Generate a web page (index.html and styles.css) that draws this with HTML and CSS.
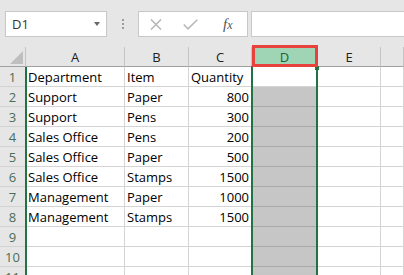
FILE: index.html
```html
<!DOCTYPE html>
<html lang="en">
<head>
    <meta charset="UTF-8">
    <meta name="viewport" content="width=device-width, initial-scale=1.0">
    <title>Workbook</title>
    <link rel="stylesheet" href="styles.css">
</head>
<body>

<!-- Name box + formula bar -->
<div class="toolbar">
    <div class="name-box">
        <span>D1</span>
        <span class="caret"></span>
    </div>
    <div class="grip"><i></i><i></i><i></i></div>
    <div class="fx-buttons">
        <svg class="icon-cancel" width="12" height="11" viewBox="0 0 12 11">
            <path d="M1 0.5 L11 10.5 M11 0.5 L1 10.5" />
        </svg>
        <svg class="icon-enter" width="15" height="11" viewBox="0 0 15 11">
            <path d="M0.8 5.5 L5 9.8 L14.3 0.8" />
        </svg>
        <span class="fx">f<span class="x">x</span></span>
    </div>
    <div class="formula-input"></div>
</div>

<!-- Grid -->
<div class="sheet-wrap">
    <div class="sheet" id="sheet">
        <div class="corner"><span class="tri"></span></div>
        <div class="col-head">A</div>
        <div class="col-head">B</div>
        <div class="col-head">C</div>
        <div class="col-head active">D</div>
        <div class="col-head">E</div>
        <div class="col-head"></div>
    </div>

    <!-- selection marks drawn over the grid -->
    <div class="marks">
        <div class="row-marker"></div>
        <div class="selection"></div>
    </div>
</div>

<script>
    const rows = [
        ['Department', 'Item', 'Quantity'],
        ['Support', 'Paper', '800'],
        ['Support', 'Pens', '300'],
        ['Sales Office', 'Pens', '200'],
        ['Sales Office', 'Paper', '500'],
        ['Sales Office', 'Stamps', '1500'],
        ['Management', 'Paper', '1000'],
        ['Management', 'Stamps', '1500'],
        [], [], []
    ];

    const sheet = document.getElementById('sheet');

    rows.forEach((row, i) => {
        const num = document.createElement('div');
        num.className = 'row-head';
        num.textContent = i + 1;
        sheet.appendChild(num);

        for (let c = 0; c < 6; c++) {
            const cell = document.createElement('div');
            cell.className = 'cell';
            const value = row[c] || '';
            // numbers sit on the right, like in a real sheet
            if (/^\d+$/.test(value)) cell.classList.add('num');
            if (c === 3) cell.classList.add(i === 0 ? 'current' : 'picked');
            cell.textContent = value;
            sheet.appendChild(cell);
        }
    });
</script>

</body>
</html>
```

FILE: styles.css
```css
body {
    margin: 0;
    padding: 0;
    background: #e6e6e6;
    font-family: 'Open Sans', 'Liberation Sans', sans-serif;
    font-size: 13px;
    color: #000;
    height: 275px;
    overflow: hidden;
}

/* ---------- formula bar ---------- */

.toolbar {
    display: flex;
    align-items: flex-start;
    height: 47px;
    padding: 11px 0 0 5px;
    box-sizing: border-box;
}

.name-box {
    width: 102px;
    height: 26px;
    box-sizing: border-box;
    background: #fff;
    border: 1px solid #c8c8c8;
    display: flex;
    align-items: center;
    justify-content: space-between;
    padding: 0 6px 0 6px;
    color: #333;
}

.caret {
    width: 0;
    height: 0;
    border-left: 3.5px solid transparent;
    border-right: 3.5px solid transparent;
    border-top: 4px solid #666;
}

.grip {
    width: 31px;
    display: flex;
    flex-direction: column;
    align-items: center;
    gap: 2px;
    padding-top: 8px;
}

.grip i {
    display: block;
    width: 2px;
    height: 2px;
    background: #9c9c9c;
}

.fx-buttons {
    width: 110px;
    height: 26px;
    box-sizing: border-box;
    background: #fff;
    border: 1px solid #c8c8c8;
    display: flex;
    align-items: center;
}

.fx-buttons svg path {
    fill: none;
    stroke: #b9b9b9;
    stroke-width: 1.6;
}

.icon-cancel {
    margin-left: 11px;
}

.icon-enter {
    margin-left: 21px;
}

.fx {
    margin-left: 25px;
    font-family: 'Liberation Serif', serif;
    font-style: italic;
    font-size: 15px;
    color: #555;
}

.fx .x {
    font-size: 12px;
}

.formula-input {
    flex: 1;
    height: 26px;
    box-sizing: border-box;
    margin-left: 3px;
    margin-right: -4px;
    background: #fff;
    border: 1px solid #c8c8c8;
}

/* ---------- sheet ---------- */

.sheet-wrap {
    position: relative;
}

.sheet,
.marks {
    display: grid;
    grid-template-columns: 26px 99px 64px 63px 66px 63px 1fr;
    grid-auto-rows: 20px;
}

.sheet {
    background: #fff;
}

.sheet > div,
.marks > div {
    box-sizing: border-box;
}

.corner {
    background: #e6e6e6;
    border-right: 1px solid #c4c4c4;
    border-bottom: 1px solid #a0a0a0;
    display: flex;
    align-items: flex-end;
    justify-content: flex-end;
    padding: 0 2px 2px 0;
}

.tri {
    width: 0;
    height: 0;
    border-left: 13px solid transparent;
    border-bottom: 13px solid #bfbfbf;
}

.col-head {
    background: #e6e6e6;
    border-right: 1px solid #c4c4c4;
    border-bottom: 1px solid #a0a0a0;
    display: flex;
    align-items: center;
    justify-content: center;
    color: #222;
}

.col-head.active {
    position: relative;
    background: #9fd5b4;
    color: #1e5e3c;
}

.col-head.active::after {
    content: '';
    position: absolute;
    top: -2px;
    left: 0;
    right: -1px;
    bottom: -1px;
    border: 3px solid #e8423f;
    z-index: 3;
}

.row-head {
    background: #e6e6e6;
    border-right: 1px solid #c4c4c4;
    border-bottom: 1px solid #d2d2d2;
    display: flex;
    align-items: center;
    justify-content: center;
    color: #4a6d57;
}

.cell {
    border-right: 1px solid #d4d4d4;
    border-bottom: 1px solid #d4d4d4;
    display: flex;
    align-items: center;
    padding: 0 2px;
    white-space: nowrap;
    overflow: hidden;
}

.cell.num {
    justify-content: flex-end;
}

.cell.picked {
    background: #c6c6c6;
    border-bottom-color: #a9a9a9;
}

.marks {
    position: absolute;
    top: 0;
    left: 0;
    right: 0;
    bottom: 0;
    pointer-events: none;
}

/* green outline of the selected column */
.selection {
    grid-column: 5;
    grid-row: 2 / span 11;
    margin-left: -1px;
    margin-top: -1px;
    border-left: 2px solid #217346;
    border-right: 2px solid #217346;
    position: relative;
}

.selection::before {
    content: '';
    position: absolute;
    top: 0;
    right: -3px;
    width: 4px;
    height: 4px;
    background: #217346;
}

/* green edge next to the row numbers */
.row-marker {
    grid-column: 1;
    grid-row: 2 / span 11;
    margin-right: -1px;
    border-right: 2px solid #217346;
}
```
